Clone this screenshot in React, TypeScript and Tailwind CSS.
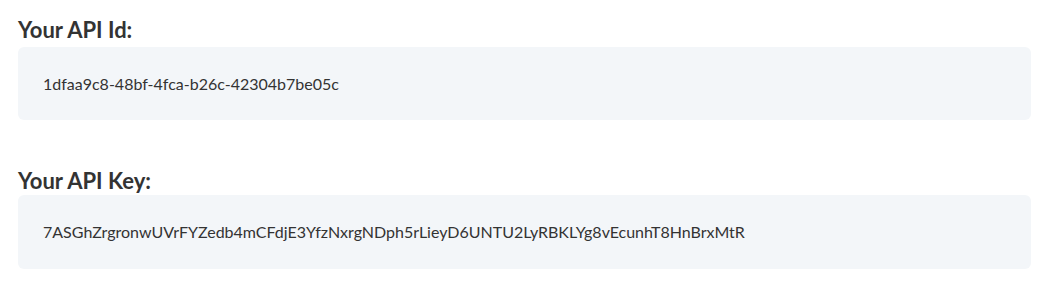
export default function App() {
  return (
    <div className="w-[1050px] h-[301px] bg-white px-[18px] pt-[17px] font-['Lato',sans-serif] text-[#333333]">
      <div className="text-[22px] leading-[26px] font-bold text-[#333]">Your API Id:</div>
      <div className="mt-[4px] h-[73px] w-[1013px] rounded-[6px] bg-[#f3f6f9] flex items-center pl-[25px] text-[16px]">
        1dfaa9c8-48bf-4fca-b26c-42304b7be05c
      </div>
      <div className="mt-[48px] text-[22px] leading-[26px] font-bold text-[#333]">Your API Key:</div>
      <div className="mt-[1px] h-[74px] w-[1013px] rounded-[6px] bg-[#f3f6f9] flex items-center pl-[25px] text-[16px]">
        7ASGhZrgronwUVrFYZedb4mCFdjE3YfzNxrgNDph5rLieyD6UNTU2LyRBKLYg8vEcunhT8HnBrxMtR
      </div>
    </div>
  );
}
